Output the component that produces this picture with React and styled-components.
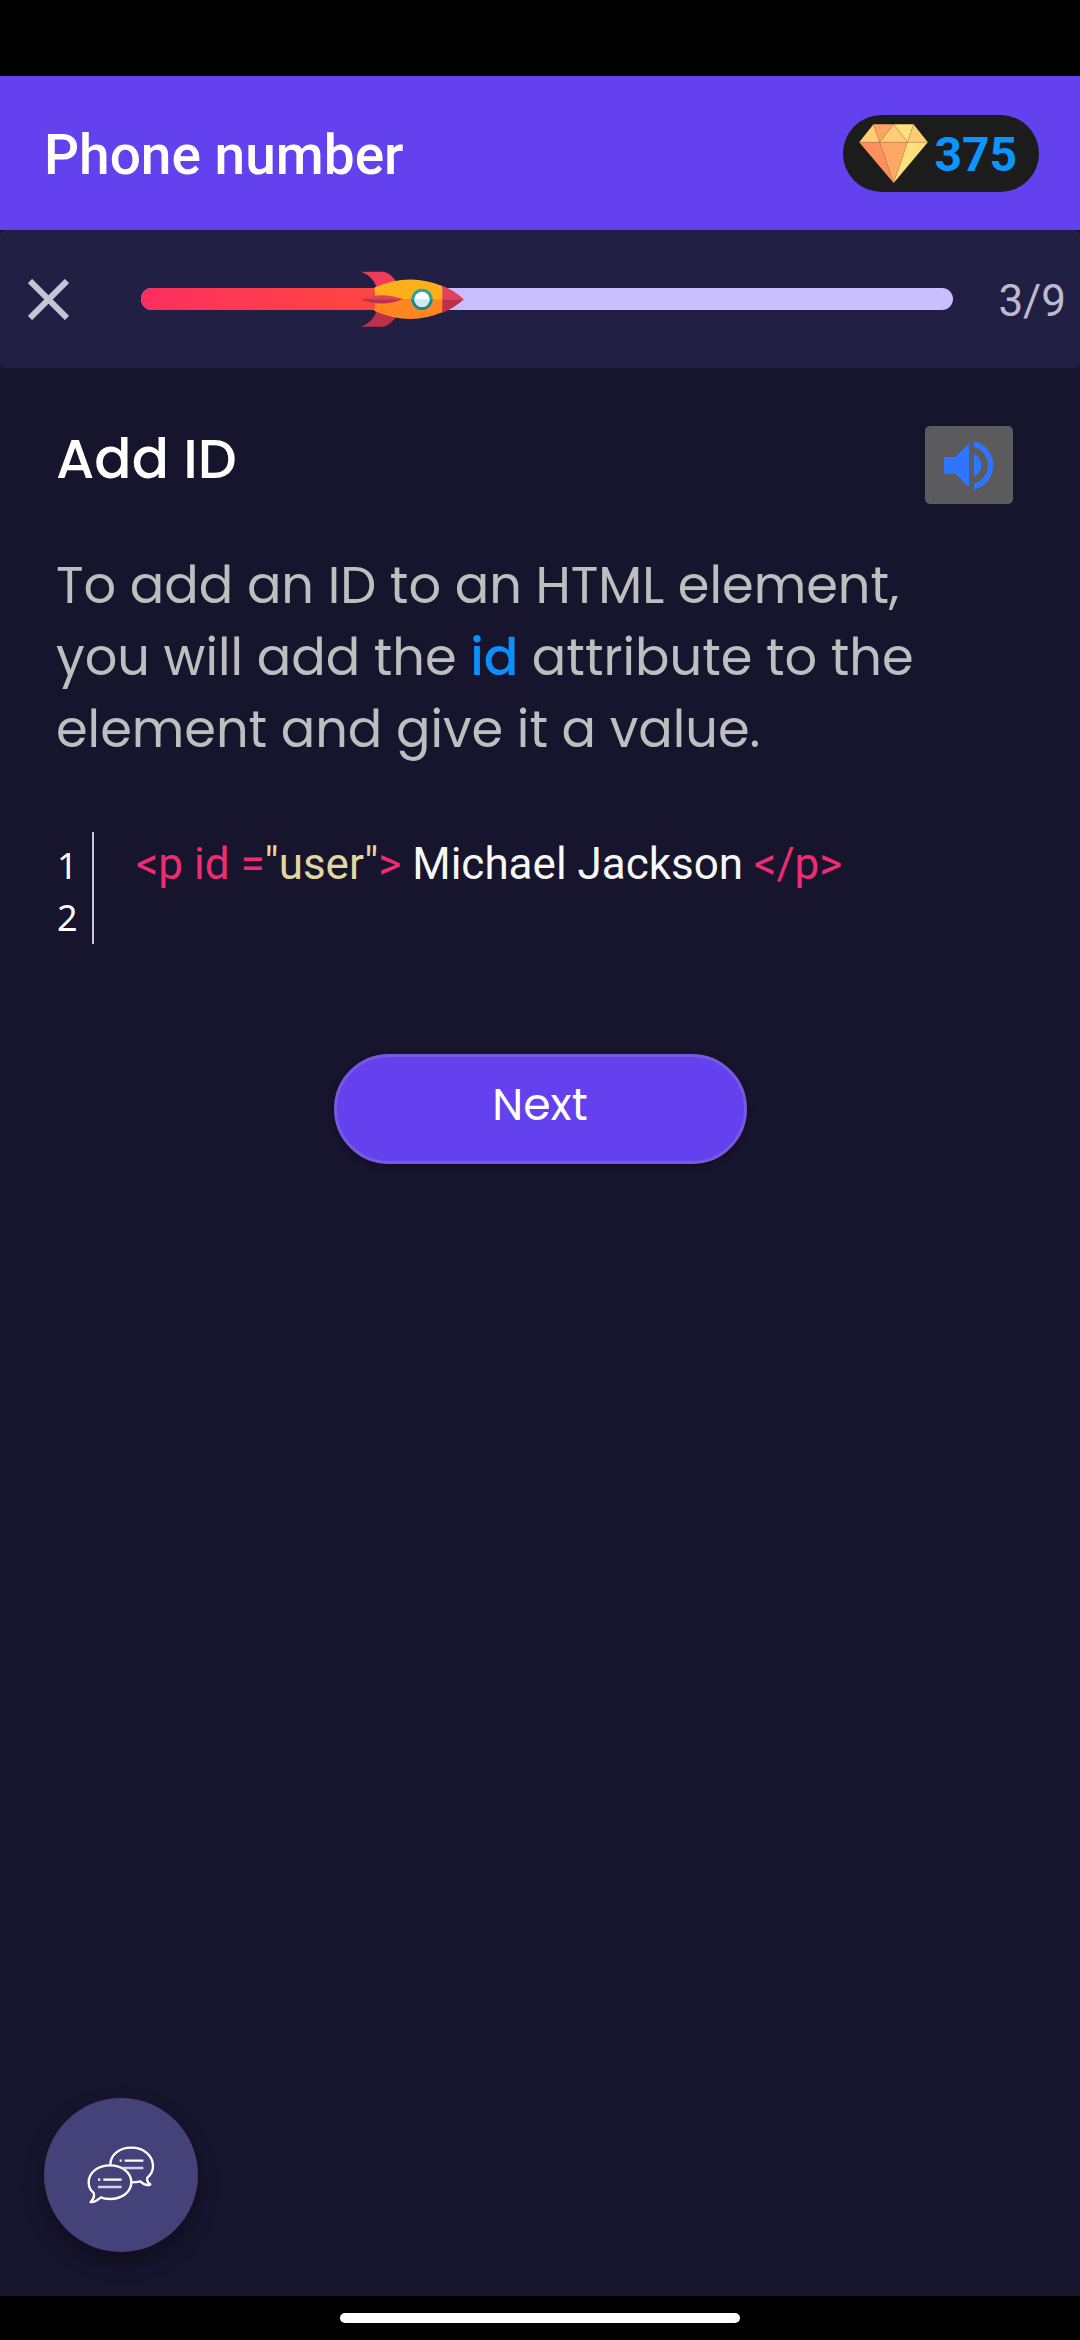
import React from "react";
import styled, { createGlobalStyle } from "styled-components";

const ui = `Roboto, "Noto Sans", sans-serif`;
const prose = `Poppins, Inter, "Open Sans", sans-serif`;

const GlobalStyle = createGlobalStyle`
  *, *::before, *::after { box-sizing: border-box; }
  body { margin: 0; background: #17142e; }
  h1, h2, p, pre { margin: 0; font-weight: 400; }
  button { border: 0; padding: 0; margin: 0; background: none; font: inherit; color: inherit; cursor: pointer; }
  svg { display: block; }
`;

const Screen = styled.div`
  min-height: 100vh;
  display: flex;
  flex-direction: column;
  background: #17142e;
  color: #ffffff;
  font-family: ${ui};
`;

const StatusBar = styled.div`
  height: 76px;
  background: #000000;
`;

const Header = styled.header`
  height: 154px;
  padding: 0 41px 0 44px;
  display: flex;
  align-items: center;
  justify-content: space-between;
  background: #6341ee;
`;

const Title = styled.h1`
  padding-top: 4px;
  font-size: 55px;
  line-height: 64px;
  font-weight: 500;
`;

const Gems = styled.div`
  height: 77px;
  width: 196px;
  padding: 0 22px 0 16px;
  display: flex;
  align-items: center;
  justify-content: space-between;
  border-radius: 39px;
  background: #1c1c1c;
  color: #0a95ff;
  font-size: 48px;
  line-height: 56px;
  font-weight: 700;
`;

const GemCount = styled.span`
  padding-top: 4px;
`;

const ProgressPanel = styled.section`
  height: 138px;
  padding: 0 14px 0 28px;
  display: flex;
  align-items: center;
  border-radius: 5px;
  background: #221f45;
`;

const CloseButton = styled.button`
  width: 41px;
  height: 41px;
  margin-right: 72px;
`;

const Track = styled.div`
  position: relative;
  flex: 1;
  height: 22px;
  border-radius: 11px;
  background: #c9bfff;
`;

const Fill = styled.div`
  height: 100%;
  border-radius: 11px;
  background: linear-gradient(90deg, #fb2e5f, #ff4b3a);
`;

const Marker = styled.div`
  position: absolute;
  top: 50%;
  transform: translate(-50%, -50%);
`;

const Count = styled.span`
  margin-left: 45px;
  padding-top: 4px;
  color: #bdbacb;
  font-size: 44px;
  line-height: 52px;
`;

const Lesson = styled.main`
  flex: 1;
  padding: 58px 56px 44px;
  display: flex;
  flex-direction: column;
`;

const LessonHead = styled.div`
  padding-right: 11px;
  display: flex;
  align-items: flex-start;
  justify-content: space-between;
`;

const Heading = styled.h2`
  font-family: ${prose};
  font-size: 55px;
  line-height: 66px;
  font-weight: 500;
`;

const SpeakButton = styled.button`
  width: 88px;
  height: 78px;
  display: grid;
  place-items: center;
  border-radius: 5px;
  background: #5b5b5d;
`;

const Copy = styled.p`
  max-width: 880px;
  margin-top: 45px;
  color: #bebebe;
  font-family: ${prose};
  font-size: 51px;
  line-height: 72px;
`;

const Term = styled.strong`
  color: #0a8ffb;
  font-weight: 500;
`;

const CodeBlock = styled.div`
  margin-top: 67px;
  display: flex;
`;

const Gutter = styled.div`
  width: 38px;
  height: 112px;
  padding: 8px 0 0 1px;
  display: flex;
  flex-direction: column;
  border-right: 2px solid #c8c7cf;
  font-family: "Noto Sans", "Open Sans", sans-serif;
  font-size: 36px;
  line-height: 52px;
`;

const Code = styled.pre`
  padding: 6px 0 0 42px;
  font-family: ${ui};
  color: #f8f8f2;
  font-size: 44px;
  line-height: 52px;
`;

const Tag = styled.span`
  color: #f12b71;
`;

const Str = styled.span`
  color: #e2d89c;
`;

const NextButton = styled.button`
  align-self: center;
  width: 413px;
  height: 110px;
  margin-top: 110px;
  padding-bottom: 8px;
  border: 3px solid #7859e0;
  border-radius: 55px;
  background: #6341ee;
  box-shadow: 0 2px 6px rgba(0, 0, 0, 0.3);
  font-family: ${prose};
  font-size: 44px;
  line-height: 52px;
`;

const ChatRow = styled.div`
  padding: 0 44px 44px;
`;

const ChatButton = styled.button`
  width: 154px;
  height: 154px;
  display: grid;
  place-items: center;
  border-radius: 50%;
  background: #454179;
  box-shadow: 0 10px 20px rgba(0, 0, 0, 0.35);
`;

const NavBar = styled.footer`
  height: 44px;
  display: flex;
  align-items: center;
  justify-content: center;
  background: #000000;
`;

const HomePill = styled.div`
  width: 37%;
  height: 10px;
  border-radius: 5px;
  background: #ffffff;
`;

function Gem() {
  return (
    <svg width="69" height="59" viewBox="117 98 207 178" aria-hidden="true">
      <path d="M160 99L117 153H179Z" fill="#ffcd73" />
      <path d="M160 99H221L179 153Z" fill="#ffa562" />
      <path d="M221 99L179 153H263Z" fill="#ffcd73" />
      <path d="M221 99H281L263 153Z" fill="#ffe07d" />
      <path d="M281 99L324 153H263Z" fill="#ffcd73" />
      <path d="M117 153H179L221 276Z" fill="#ff8f5d" />
      <path d="M179 153H263L221 276Z" fill="#ffaa64" />
      <path d="M263 153H324L221 276Z" fill="#ffe07d" />
      <path
        d="M117 153H324M160 99L179 153L221 276L263 153L281 99M179 153L221 99L263 153"
        fill="none"
        stroke="#b98248"
        strokeOpacity="0.6"
        strokeWidth="1.5"
      />
    </svg>
  );
}

function Rocket() {
  return (
    <svg width="104" height="56" viewBox="118 92 312 166" aria-hidden="true">
      <path d="M122 93H190Q210 98 226 122L168 140Q158 108 122 93Z" fill="#ee3c59" />
      <path d="M122 258H190Q210 252 226 229L168 211Q158 243 122 258Z" fill="#bb3147" />
      <path d="M160 141Q265 94 365 136L370 176H160Q166 158 160 141Z" fill="#ffaf1a" />
      <path d="M160 210Q265 257 365 215L370 176H160Q166 193 160 210Z" fill="#ff8620" />
      <path d="M365 135Q400 148 430 176H365Z" fill="#e0415c" />
      <path d="M365 217Q400 203 430 176H365Z" fill="#bb3147" />
      <path d="M118 176Q182 151 248 176Z" fill="#df4359" />
      <path d="M118 176Q182 201 248 176Z" fill="#bb3147" />
      <circle cx="304" cy="176" r="32" fill="#2aa3a3" />
      <path d="M272 176A32 32 0 0 0 336 176Z" fill="#238789" />
      <circle cx="304" cy="176" r="23" fill="#ffffff" />
      <path d="M281 176A23 23 0 0 0 327 176Z" fill="#cdeafa" />
    </svg>
  );
}

function Cross() {
  return (
    <svg width="41" height="41" viewBox="0 0 41 41" aria-hidden="true">
      <path d="M2 2L39 39M39 2L2 39" stroke="#c3c5d4" strokeWidth="6" />
    </svg>
  );
}

function Speaker() {
  return (
    <svg width="50" height="49" viewBox="132 662 150 147" aria-hidden="true" fill="#2f75ff">
      <path d="M132 710H166L207 670V800L166 760H132Z" />
      <path d="M222 700Q244 712 244 735Q244 758 222 769Z" />
      <path d="M222 662A75 75 0 0 1 222 808V790A57 57 0 0 0 222 680Z" />
    </svg>
  );
}

function Bubbles() {
  return (
    <svg width="68" height="58" viewBox="202 228 204 174" aria-hidden="true" fill="none" stroke="#ffffff" strokeWidth="7">
      <path
        d="M272 284C272 254 300 233 335 233C371 233 400 256 400 288C400 302 394 314 383 323C381 332 385 339 392 343C382 348 370 342 362 334C354 336 345 337 335 337"
        strokeLinejoin="round"
      />
      <path
        d="M271 286C306 286 335 307 335 337C335 366 307 387 271 387C261 387 252 386 244 382C236 388 226 399 213 396C222 387 225 378 222 369C212 361 207 350 207 337C207 307 235 286 271 286Z"
        strokeLinejoin="round"
      />
      <path d="M300 272H306M315 272H371M235 329H242M251 329H306" />
      <path d="M310 294H371M235 351H306" stroke="#d3d1ee" strokeWidth="8" />
    </svg>
  );
}

const step = 3;
const total = 9;

export default function App() {
  const done = `${(step / total) * 100}%`;
  return (
    <Screen>
      <GlobalStyle />
      <StatusBar />
      <Header>
        <Title>Phone number</Title>
        <Gems>
          <Gem />
          <GemCount>375</GemCount>
        </Gems>
      </Header>
      <ProgressPanel>
        <CloseButton aria-label="Close">
          <Cross />
        </CloseButton>
        <Track role="progressbar" aria-label="Lesson progress" aria-valuemin={0} aria-valuemax={total} aria-valuenow={step}>
          <Fill style={{ width: done }} />
          <Marker style={{ left: done }}>
            <Rocket />
          </Marker>
        </Track>
        <Count>
          {step}/{total}
        </Count>
      </ProgressPanel>
      <Lesson>
        <LessonHead>
          <Heading>Add ID</Heading>
          <SpeakButton aria-label="Read aloud">
            <Speaker />
          </SpeakButton>
        </LessonHead>
        <Copy>
          To add an ID to an HTML element, you will add the <Term>id</Term> attribute to the element and give it a value.
        </Copy>
        <CodeBlock>
          <Gutter>
            <span>1</span>
            <span>2</span>
          </Gutter>
          <Code>
            <Tag>&lt;p id =</Tag>
            <Str>"user"</Str>
            <Tag>&gt;</Tag> Michael Jackson <Tag>&lt;/p&gt;</Tag>
          </Code>
        </CodeBlock>
        <NextButton>Next</NextButton>
      </Lesson>
      <ChatRow>
        <ChatButton aria-label="Open chat">
          <Bubbles />
        </ChatButton>
      </ChatRow>
      <NavBar>
        <HomePill />
      </NavBar>
    </Screen>
  );
}
